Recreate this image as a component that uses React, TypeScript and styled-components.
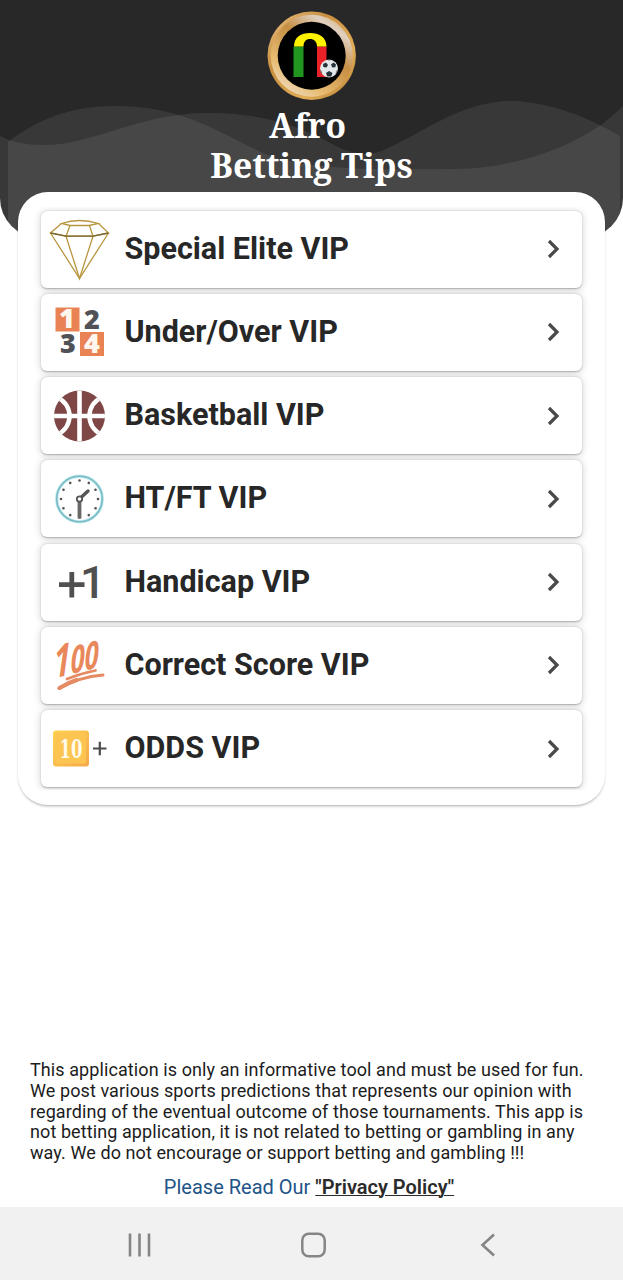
import type { ReactNode } from 'react';
import styled, { createGlobalStyle } from 'styled-components';

const DiamondIcon = () => (
  <svg width="64" height="64" viewBox="0 0 64 64" fill="none" stroke="#b8963f" strokeWidth="1.3">
    <path d="M14.5 6.5Q32 .5 51.5 6.5L42 8.5H23z" />
    <path d="M14.5 6.5 3.5 16 19 19.2h27L61.5 16l-10-9.5" />
    <path d="M23 8.5 19 19.2 32.5 61.5 46 19.2l-3.5-10.7" />
    <path d="M3.5 16l29 45.5 29-45.5" />
    <path d="M3.5 16 19 19.2h27L61.5 16" stroke="#77652f" />
  </svg>
);

const NumbersIcon = () => (
  <svg width="64" height="64" viewBox="0 0 64 64">
    <rect x="8.5" y="7.5" width="24" height="24" fill="#e98354" />
    <rect x="33" y="32" width="24" height="24" fill="#e98354" />
    <NumberText x="20" y="28">1</NumberText>
    <NumberText x="45" y="28.5" $dark>2</NumberText>
    <NumberText x="21" y="53" $dark>3</NumberText>
    <NumberText x="45" y="53">4</NumberText>
  </svg>
);

const BasketballIcon = () => (
  <svg width="64" height="64" viewBox="0 0 64 64">
    <clipPath id="ball">
      <circle cx="32.5" cy="32" r="25.5" />
    </clipPath>
    <g clipPath="url(#ball)">
      <rect width="64" height="64" fill="#7e4644" />
      <g fill="none" stroke="#fff" strokeWidth="4.6">
        <path d="M32.5 4v56M4 32h56" />
        <path d="M10.5 13.5C26.5 21 26.5 43 10.5 50.5M54.5 13.5C38.5 21 38.5 43 54.5 50.5" />
      </g>
    </g>
  </svg>
);

const ClockIcon = () => (
  <svg width="64" height="64" viewBox="0 0 64 64" fill="none">
    <circle cx="32.5" cy="32" r="22.8" stroke="#c9f0f2" strokeWidth="3.5" />
    <circle cx="32.5" cy="32" r="22.8" stroke="#7dbcc6" strokeWidth="1.8" />
    {Array.from({ length: 12 }, (_, i) => (
      <circle key={i} cx="32.5" cy="13.5" r="1.3" fill="#555" transform={`rotate(${i * 30} 32.5 32)`} />
    ))}
    <path d="M32.5 34v17.5" stroke="#6a6767" strokeWidth="3.8" />
    <path d="m34.5 30 6.5-6" stroke="#555" strokeWidth="3.4" strokeLinecap="round" />
    <circle cx="32.5" cy="32" r="2.7" stroke="#555" strokeWidth="1.8" fill="#fff" />
  </svg>
);

const PlusOneIcon = () => (
  <svg width="64" height="64" viewBox="0 0 64 64">
    <path d="M12 34.7h25.5M24.8 22v25.5" stroke="#505050" strokeWidth="4.8" />
    <OneText x="33" y="47.5">1</OneText>
  </svg>
);

const HundredIcon = () => (
  <svg width="64" height="64" viewBox="0 0 64 64" overflow="visible">
    <HundredText textLength="46" lengthAdjust="spacingAndGlyphs" transform="translate(7 45.5) rotate(-14) skewX(-14)">
      <tspan fontSize="44">1</tspan>
      <tspan fontSize="37">00</tspan>
    </HundredText>
    <g fill="none" stroke="#e58a62" strokeLinecap="round">
      <path d="M20 46q13-5.500 28.500-8.500" strokeWidth="2.8" />
      <path d="M12 55.500q20-11.500 44-13.500" strokeWidth="3" />
      <path d="M12.5 55q9-5.500 17-8" strokeWidth="4" />
    </g>
  </svg>
);

const TenPlusIcon = () => (
  <svg width="64" height="64" viewBox="0 0 64 64">
    <defs>
      <linearGradient id="tile" x1="0" y1="0" x2="1" y2="1">
        <stop offset="0" stopColor="#ffd34f" />
        <stop offset="1" stopColor="#f5a94b" />
      </linearGradient>
    </defs>
    <rect x="6" y="13.5" width="36" height="36" rx="3" fill="url(#tile)" />
    <rect x="8.5" y="15.5" width="30.5" height="31" rx="2" fill="#fcc552" />
    <TenText x="24" y="41" textLength="23" lengthAdjust="spacingAndGlyphs">
      10
    </TenText>
    <path d="M46 31.5h13.5M52.8 24.7v13.6" stroke="#4b4b4b" strokeWidth="2.2" />
  </svg>
);

const Logo = () => (
  <LogoMark viewBox="0 0 90 90">
    <defs>
      <linearGradient id="rim" x1="0" y1="0" x2="1" y2="1">
        <stop offset="0" stopColor="#e9c188" />
        <stop offset="0.35" stopColor="#c98f3f" />
        <stop offset="0.7" stopColor="#e2ae58" />
        <stop offset="1" stopColor="#b27b31" />
      </linearGradient>
      <linearGradient id="ring" x1="0.15" y1="1" x2="0.85" y2="0">
        <stop offset="0" stopColor="#efdfcf" />
        <stop offset="0.25" stopColor="#e8bd73" />
        <stop offset="0.6" stopColor="#c58e43" />
        <stop offset="0.85" stopColor="#e0d0c2" />
        <stop offset="1" stopColor="#d5a558" />
      </linearGradient>
    </defs>
    <circle cx="44.7" cy="44.7" r="44.2" fill="url(#rim)" />
    <circle cx="44.7" cy="44.7" r="41" fill="url(#ring)" />
    <circle cx="44.7" cy="44.7" r="34" fill="#000" />
    <path d="M26.5 35.5h10V66h-10z" fill="#20961f" />
    <path d="M50 35.5h9.5V66H50z" fill="#ea2228" />
    <path d="M27 35.5C27 26 34 22 43 22s16.5 4 16.5 13.5H50c0-5-3-7.5-7-7.5s-6.5 2.5-6.5 7.5z" fill="#fff200" />
    <circle cx="62" cy="57.5" r="9" fill="#e5e8ea" />
    <g fill="#26323a">
      <path d="m59 62 3-2 3.5 2-1.3 3.5h-4z" />
      <path d="m56 53 3-1.5 2 2.5-1.5 2.5-3.2-.5zM64 53.5l2.5-2 2.5 2-.7 2.8-3 .2z" />
      <path d="m52.8 58 2 2.5.5 3-1.5-2zM71 58l-2 2.5-.5 3 1.5-2zM60 48.7l2-.5 2 .5-2 1z" opacity="0.6" />
    </g>
  </LogoMark>
);

const ITEMS: { label: string; icon: ReactNode }[] = [
  { label: 'Special Elite VIP', icon: <DiamondIcon /> },
  { label: 'Under/Over VIP', icon: <NumbersIcon /> },
  { label: 'Basketball VIP', icon: <BasketballIcon /> },
  { label: 'HT/FT VIP', icon: <ClockIcon /> },
  { label: 'Handicap VIP', icon: <PlusOneIcon /> },
  { label: 'Correct Score VIP', icon: <HundredIcon /> },
  { label: 'ODDS VIP', icon: <TenPlusIcon /> },
];

const App = () => {
  return (
    <Page>
      <GlobalStyle />
      <Backdrop>
        <svg width="623" height="238" viewBox="0 0 623 238" fill="#fff" fillOpacity="0.078">
          <path d="M8 142C40 118 72 106 115 106C190 106 225 138 275 158C330 172 395 169 455 169C520 168 570 146 601 125Q612 117 623 106V238H8z" />
          <path d="M0 136C12 142 26 145 44 145C95 145 140 112 210 113C270 113 308 130 340 148Q365 158 382 151C420 135 460 101 512 101C550 102 590 118 620 136V238H0z" />
        </svg>
      </Backdrop>
      <Header>
        <Logo />
        <Title>
          <span>Afro</span>
          <span>Betting Tips</span>
        </Title>
      </Header>
      <Card>
        <List>
          {ITEMS.map(({ label, icon }) => (
            <Row key={label}>
              {icon}
              <Label>{label}</Label>
              <svg width="14" height="20" viewBox="0 0 14 20" fill="none" stroke="#4a4a4a" strokeWidth="3.2">
                <path d="m2 2 8 8-8 8" />
              </svg>
            </Row>
          ))}
        </List>
      </Card>
      <Notice>
        This application is only an informative tool and must be used for fun.
        <br />
        We post various sports predictions that represents our opinion with
        <br />
        regarding of the eventual outcome of those tournaments. This app is
        <br />
        not betting application, it is not related to betting or gambling in any
        <br />
        way. We do not encourage or support betting and gambling !!!
      </Notice>
      <Policy>
        Please Read Our <PolicyLink href="#">"Privacy Policy"</PolicyLink>
      </Policy>
      <NavBar>
        <svg width="24" height="24" viewBox="0 0 24 24" fill="none" stroke="#858585" strokeWidth="2.6">
          <path d="M2 .5v23M11.5 .5v23M21 .5v23" />
        </svg>
        <svg width="26" height="26" viewBox="0 0 26 26" fill="none" stroke="#858585" strokeWidth="2.5">
          <rect x="1.3" y="1.8" width="22.4" height="22.4" rx="6.5" />
        </svg>
        <svg width="24" height="24" viewBox="0 0 24 24" fill="none" stroke="#858585" strokeWidth="2.6">
          <path d="M18 1.5 6.5 12 18 22.5" />
        </svg>
      </NavBar>
    </Page>
  );
};

export default App;

const GlobalStyle = createGlobalStyle`
  * {
    box-sizing: border-box;
  }
  body {
    margin: 0;
    background: #fff;
    font-family: Roboto, 'Liberation Sans', sans-serif;
  }
  svg {
    display: block;
    flex-shrink: 0;
  }
`;

const Page = styled.div`
  position: relative;
  display: flex;
  flex-direction: column;
  width: 623px;
  height: 1280px;
  overflow: hidden;
`;

const Backdrop = styled.div`
  position: absolute;
  top: 0;
  left: 0;
  width: 100%;
  height: 238px;
  background: #282828;
  border-radius: 0 0 40px 40px;
  overflow: hidden;
`;

const Header = styled.header`
  position: relative;
  display: flex;
  flex-direction: column;
  align-items: center;
  height: 192px;
  padding-top: 11px;
`;

const LogoMark = styled.svg`
  width: 90px;
  height: 90px;
`;

const Title = styled.h1`
  display: flex;
  flex-direction: column;
  align-items: center;
  margin: 4px 0 0;
  color: #fff;
  font-family: 'Noto Serif', 'DejaVu Serif Condensed', 'DejaVu Serif', serif;
  font-size: 33.6px;
  font-weight: 700;
  line-height: 40px;

  span:first-child {
    margin-right: 8px;
  }
`;

const Card = styled.main`
  position: relative;
  height: 613px;
  margin: 0 18px;
  padding-top: 15px;
  background: #fff;
  border-radius: 30px;
  box-shadow: 0 2px 3px -1px rgba(0, 0, 0, 0.35);
`;

const List = styled.div`
  display: flex;
  flex-direction: column;
  gap: 6.3px;
  height: 583px;
  padding: 3.5px 23px 0;
  overflow: hidden;
`;

const Row = styled.div`
  display: flex;
  align-items: center;
  height: 77px;
  flex-shrink: 0;
  padding: 0 21px 0 6px;
  background: #fff;
  border-radius: 6px;
  box-shadow: 0 0.5px 1.5px rgba(0, 0, 0, 0.24), 0 1px 7px 1px rgba(0, 0, 0, 0.15);
`;

const Label = styled.span`
  flex: 1;
  margin: 0 0 1px 13.5px;
  color: #272727;
  font-size: 30.5px;
  font-weight: 700;
  line-height: 36px;
  white-space: nowrap;
`;

const NumberText = styled.text<{ $dark?: boolean }>`
  fill: ${({ $dark }) => ($dark ? '#505257' : '#fff6ee')};
  font-family: 'Open Sans', sans-serif;
  font-size: 27px;
  font-weight: 800;
  text-anchor: middle;
`;

const OneText = styled.text`
  fill: #505050;
  font-size: 45px;
  font-weight: 500;
`;

const HundredText = styled.text`
  fill: #e9885b;
  font-family: 'Open Sans', sans-serif;
  font-style: italic;
  font-weight: 700;
`;

const TenText = styled.text`
  fill: #fffbea;
  font-family: 'DejaVu Serif', serif;
  font-size: 26px;
  font-weight: 700;
  text-anchor: middle;
`;

const Notice = styled.p`
  margin: 255px 0 0 30px;
  color: #1c1c1c;
  font-size: 18px;
  line-height: 20.8px;
  letter-spacing: 0.09px;
  white-space: nowrap;
`;

const Policy = styled.p`
  margin: 11px 0 0;
  padding-right: 5px;
  color: #225488;
  font-size: 20px;
  line-height: 24px;
  text-align: center;
`;

const PolicyLink = styled.a`
  color: #2b2b2b;
  font-weight: 600;
  text-decoration: underline;
  text-decoration-thickness: 1px;
`;

const NavBar = styled.nav`
  display: flex;
  justify-content: space-between;
  align-items: center;
  height: 73px;
  margin-top: auto;
  padding: 3px 123px 0 128px;
  background: #f1f1f1;
`;
